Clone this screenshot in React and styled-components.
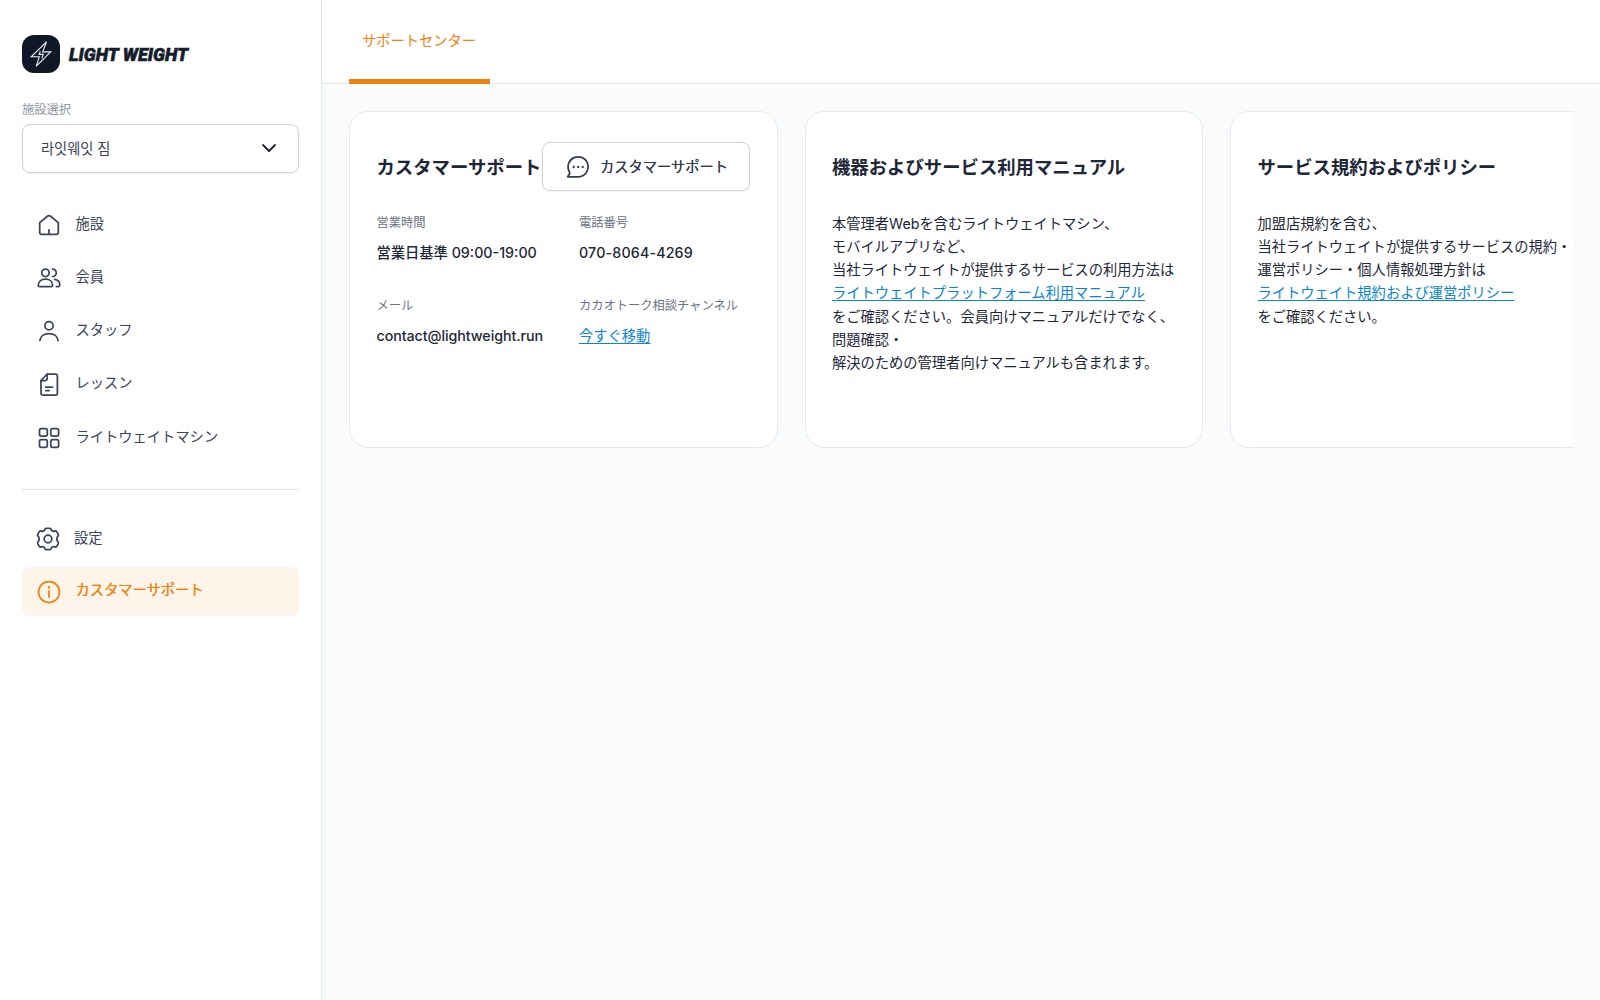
import React from "react";
import styled, { createGlobalStyle, css } from "styled-components";

const Global = createGlobalStyle`
  *, *::before, *::after { box-sizing: border-box; }
  html, body, #root { margin: 0; height: 100%; }
  body {
    background: #f9fbfd;
    color: #1e2737;
    font-family: Inter, "Noto Sans CJK JP", "Noto Sans CJK KR", sans-serif;
    font-size: 14.28px;
    overflow: hidden;
  }
  h1, h2, p, dl, dt, dd, ul { margin: 0; padding: 0; }
  button { font: inherit; color: inherit; cursor: pointer; }
`;

const Shell = styled.div`
  display: grid;
  grid-template-columns: 322px 1fr;
  height: 1000px;
`;

const Sidebar = styled.aside`
  display: flex;
  flex-direction: column;
  padding: 35px 22px 0;
  background: #fff;
  border-right: 1px solid #e5eaed;
`;

const Brand = styled.div`
  display: flex;
  align-items: center;
  gap: 9px;
  height: 38px;
`;

const BrandMark = styled.span`
  display: grid;
  place-items: center;
  width: 38px;
  height: 38px;
  border-radius: 12px;
  background: #101828;
`;

const BrandName = styled.svg`
  display: block;
  overflow: visible;
`;

const FieldLabel = styled.div`
  margin-top: 27px;
  height: 20px;
  line-height: 20px;
  font-size: 12.25px;
  color: #9095a6;
`;

const Select = styled.button`
  display: flex;
  align-items: center;
  justify-content: space-between;
  margin-top: 4px;
  width: 277px;
  height: 49px;
  padding: 0 21px 3px 18px;
  background: #fff;
  border: 1px solid #d0d3d8;
  border-radius: 8px;
  box-shadow: 0 1px 2px rgba(16, 24, 40, 0.06);
  color: #3b4355;
  letter-spacing: -0.05px;
`;

const Nav = styled.nav`
  display: flex;
  flex-direction: column;
  gap: ${(p) => p.$gap}px;
  margin-top: ${(p) => p.$top}px;
`;

const NavItem = styled.a`
  display: flex;
  align-items: center;
  gap: 14.5px;
  width: 277px;
  height: ${(p) => (p.$active ? 49 : 48)}px;
  padding-left: ${(p) => (p.$shift ? 13.500 : 15)}px;
  border-radius: 8px;
  color: #3c4458;
  ${(p) =>
    p.$active &&
    css`
      background: #fff4ea;
      color: #f0810f;
      text-shadow: 0 0 0.4px currentColor;
    `}
`;

const NavText = styled.span`
  height: 22px;
  line-height: 22px;
  margin-top: -3px;
`;

const Divider = styled.div`
  height: 1px;
  margin-top: 27px;
  background: #e3e5e9;
`;

const Main = styled.main`
  display: flex;
  flex-direction: column;
  min-width: 0;
`;

const TabBar = styled.header`
  display: flex;
  height: 84px;
  padding-left: 27px;
  background: #fff;
  border-bottom: 1px solid #e4e8ec;
`;

const Tab = styled.button`
  width: 141px;
  height: 84px;
  padding: 0 1px 0 0;
  background: none;
  border: 0;
  border-bottom: 5px solid #f0810f;
  color: #f0810f;
`;

const Cards = styled.section`
  display: flex;
  gap: 27px;
  margin: 27px 26px 0 27px;
  overflow: hidden;
`;

const Card = styled.article`
  flex: none;
  width: ${(p) => p.$width}px;
  height: 337px;
  padding: 30px 26.5px 0;
  background: #fff;
  border: 1px solid #e4e9ed;
  border-radius: 19px;
`;

const CardHead = styled.div`
  display: flex;
  align-items: center;
  justify-content: space-between;
  height: 49px;
`;

const CardTitle = styled.h2`
  padding-top: 1px;
  font-size: 18.38px;
  line-height: 26px;
  font-weight: 600;
  white-space: nowrap;
`;

const ChatButton = styled.button`
  display: flex;
  align-items: center;
  gap: 10px;
  flex: none;
  width: 208px;
  height: 49px;
  padding: 0 0 0 23px;
  background: #fff;
  border: 1px solid #d0d5d9;
  border-radius: 8px;
  box-shadow: 0 1px 2px rgba(16, 24, 40, 0.06);
  color: #343c4f;
  text-shadow: 0 0 0.4px currentColor;
`;

const ChatLabel = styled.span`
  padding-bottom: 2px;
`;

const Facts = styled.dl`
  display: grid;
  grid-template-columns: 202.5px auto;
  row-gap: 29px;
  margin-top: 20.5px;
  white-space: nowrap;
`;

const Term = styled.dt`
  height: 22px;
  line-height: 22px;
  font-size: 12.25px;
  color: #6c7285;
`;

const Value = styled.dd`
  height: 26px;
  margin-top: 6px;
  line-height: 26px;
  font-weight: 500;
  letter-spacing: ${(p) => p.$track || 0}px;
`;

const Link = styled.a`
  color: #0c86c8;
  font-weight: 400;
  text-decoration: underline;
  text-underline-offset: 2px;
`;

const Copy = styled.p`
  margin-top: 20.5px;
  line-height: 23.33px;
  white-space: nowrap;
`;

const Line = styled.span`
  display: block;
`;

const Glyph = ({ children, size = 24, width = 1.75 }) => (
  <svg width={size} height={size} viewBox="0 0 24 24" fill="none" stroke="currentColor" strokeWidth={width} strokeLinecap="round" strokeLinejoin="round">
    {children}
  </svg>
);

const HomeIcon = () => (
  <Glyph>
    <path d="M2.700 9.600 10.400 3.300a2.600 2.600 0 0 1 3.200 0l7.700 6.300v9.900a1.800 1.800 0 0 1-1.800 1.800H4.500a1.800 1.800 0 0 1-1.800-1.800Z" />
    <path d="M12 16.800v4.400" />
  </Glyph>
);

const MembersIcon = () => (
  <Glyph>
    <circle cx="8.400" cy="6.800" r="3.700" />
    <path d="M1.200 19.200c0-3.700 3-6 7.200-6s7.200 2.300 7.200 6c0 .8-.5 1.300-1.300 1.300H2.500c-.8 0-1.300-.5-1.300-1.300Z" />
    <path d="M15.600 3.100a3.700 3.700 0 1 1 0 7.400" />
    <path d="M17.600 13.400c3.200.4 5.200 2.600 5.200 5.500 0 1-.5 1.600-1.400 1.600h-2" />
  </Glyph>
);

const StaffIcon = () => (
  <Glyph>
    <circle cx="12" cy="5.800" r="4.100" />
    <path d="M2.900 20.700c.4-4.500 4.300-7.200 9.100-7.200s8.700 2.700 9.100 7.200" />
  </Glyph>
);

const LessonIcon = () => (
  <Glyph>
    <path d="M10.200 1H18.500a1.900 1.900 0 0 1 1.900 1.900v17.300a1.900 1.900 0 0 1-1.900 1.900H5.900A1.900 1.900 0 0 1 4 20.200V7.500Z" />
    <path d="M10.200 1V5.700A1.800 1.800 0 0 1 8.400 7.500H4M8.700 14.200h6.900M8.700 17.500h3.500" />
  </Glyph>
);

const MachineIcon = () => (
  <Glyph>
    <rect x="2.500" y="2.500" width="7.800" height="7.600" rx="1.800" />
    <rect x="13.800" y="2.500" width="7.800" height="7.600" rx="1.800" />
    <rect x="2.500" y="13.700" width="7.800" height="7.600" rx="1.800" />
    <rect x="13.800" y="13.700" width="7.800" height="7.600" rx="1.800" />
  </Glyph>
);

const SettingsIcon = () => (
  <Glyph>
    <path d="M10.200 1.300h3.600q1.100 0 1.400 1.200q.3 1.400 1.500 1.700q1 .3 2-.1q1.200-.5 2 .5l1.600 2.800q.5 1.100-.4 1.900q-1.100.9-1.100 2.700t1.100 2.700q.9.800.4 1.900l-1.600 2.800q-.8 1-2 .5q-1-.4-2-.1q-1.200.3-1.500 1.700q-.3 1.200-1.400 1.200h-3.600q-1.100 0-1.400-1.200q-.3-1.400-1.500-1.700q-1-.3-2 .1q-1.200.5-2-.5l-1.600-2.800q-.5-1.100.4-1.900q1.100-.9 1.100-2.700t-1.100-2.700q-.9-.8-.4-1.900l1.600-2.800q.8-1 2-.5q1 .4 2 .1q1.200-.3 1.500-1.700q.3-1.200 1.400-1.200Z" />
    <circle cx="12" cy="12" r="3.800" />
  </Glyph>
);

const InfoIcon = () => (
  <Glyph>
    <circle cx="12" cy="12" r="10.500" />
    <path d="M12 10.800v6.200" />
    <circle cx="12" cy="7.300" r=".5" fill="currentColor" />
  </Glyph>
);

const ChatIcon = () => (
  <Glyph>
    <path d="M1.700 21.800H12.600A10 10 0 1 0 3.300 16.600c.5 1 .5 1.900 0 2.700Z" />
    <path d="M7.700 12h.01M12.200 12h.01M16.700 12h.01" strokeWidth="2.300" />
  </Glyph>
);

const BoltIcon = () => (
  <svg width="38" height="38" viewBox="0 0 38 38" fill="none" stroke="#eef1f5" strokeWidth="1.100" strokeLinejoin="miter">
    <path d="M24.500 6.800 9.200 21.800H17.300L14.300 31.200 28.700 16.900H20.600Z" />
    <path d="m18.300 16.200-1.200 3.200h4.200l-1.600 4" />
  </svg>
);

const primary = [
  [HomeIcon, "施設"],
  [MembersIcon, "会員"],
  [StaffIcon, "スタッフ"],
  [LessonIcon, "レッスン"],
  [MachineIcon, "ライトウェイトマシン"],
];

export default function App() {
  return (
    <>
      <Global />
      <Shell>
        <Sidebar>
          <Brand>
            <BrandMark><BoltIcon /></BrandMark>
            <BrandName width="120" height="20">
              <text x="0" y="17" textLength="119" lengthAdjust="spacingAndGlyphs" fontFamily="Roboto, sans-serif" fontSize="18.800" fontWeight="900" fontStyle="italic" fill="#151d2c" stroke="#151d2c" strokeWidth="0.600">LIGHT WEIGHT</text>
            </BrandName>
          </Brand>
          <FieldLabel>施設選択</FieldLabel>
          <Select>
            <span>라잇웨잇 짐</span>
            <svg width="16" height="16" viewBox="0 0 16 16" fill="none" stroke="#1b2230" strokeWidth="1.800" strokeLinecap="round" strokeLinejoin="round"><path d="m2 6 6 6 6-6" /></svg>
          </Select>
          <Nav $top={28} $gap={5.3}>
            {primary.map(([Icon, label]) => (
              <NavItem key={label}><Icon /><NavText>{label}</NavText></NavItem>
            ))}
          </Nav>
          <Divider />
          <Nav $top={25} $gap={4}>
            <NavItem $shift><SettingsIcon /><NavText>設定</NavText></NavItem>
            <NavItem $active><InfoIcon /><NavText>カスタマーサポート</NavText></NavItem>
          </Nav>
        </Sidebar>
        <Main>
          <TabBar><Tab>サポートセンター</Tab></TabBar>
          <Cards>
            <Card $width={428.5}>
              <CardHead>
                <CardTitle>カスタマーサポート</CardTitle>
                <ChatButton><ChatIcon /><ChatLabel>カスタマーサポート</ChatLabel></ChatButton>
              </CardHead>
              <Facts>
                <div><Term>営業時間</Term><Value>営業日基準 09:00-19:00</Value></div>
                <div><Term>電話番号</Term><Value $track={0.15}>070-8064-4269</Value></div>
                <div><Term>メール</Term><Value $track={-0.07}>contact@lightweight.run</Value></div>
                <div><Term>カカオトーク相談チャンネル</Term><Value><Link>今すぐ移動</Link></Value></div>
              </Facts>
            </Card>
            <Card $width={398.5}>
              <CardHead><CardTitle>機器およびサービス利用マニュアル</CardTitle></CardHead>
              <Copy>
                <Line>本管理者Webを含むライトウェイトマシン、</Line>
                <Line>モバイルアプリなど、</Line>
                <Line>当社ライトウェイトが提供するサービスの利用方法は</Line>
                <Line><Link>ライトウェイトプラットフォーム利用マニュアル</Link></Line>
                <Line>をご確認ください。会員向けマニュアルだけでなく、</Line>
                <Line>問題確認・</Line>
                <Line>解決のための管理者向けマニュアルも含まれます。</Line>
              </Copy>
            </Card>
            <Card $width={398.5}>
              <CardHead><CardTitle>サービス規約およびポリシー</CardTitle></CardHead>
              <Copy>
                <Line>加盟店規約を含む、</Line>
                <Line>当社ライトウェイトが提供するサービスの規約・</Line>
                <Line>運営ポリシー・個人情報処理方針は</Line>
                <Line><Link>ライトウェイト規約および運営ポリシー</Link></Line>
                <Line>をご確認ください。</Line>
              </Copy>
            </Card>
          </Cards>
        </Main>
      </Shell>
    </>
  );
}
